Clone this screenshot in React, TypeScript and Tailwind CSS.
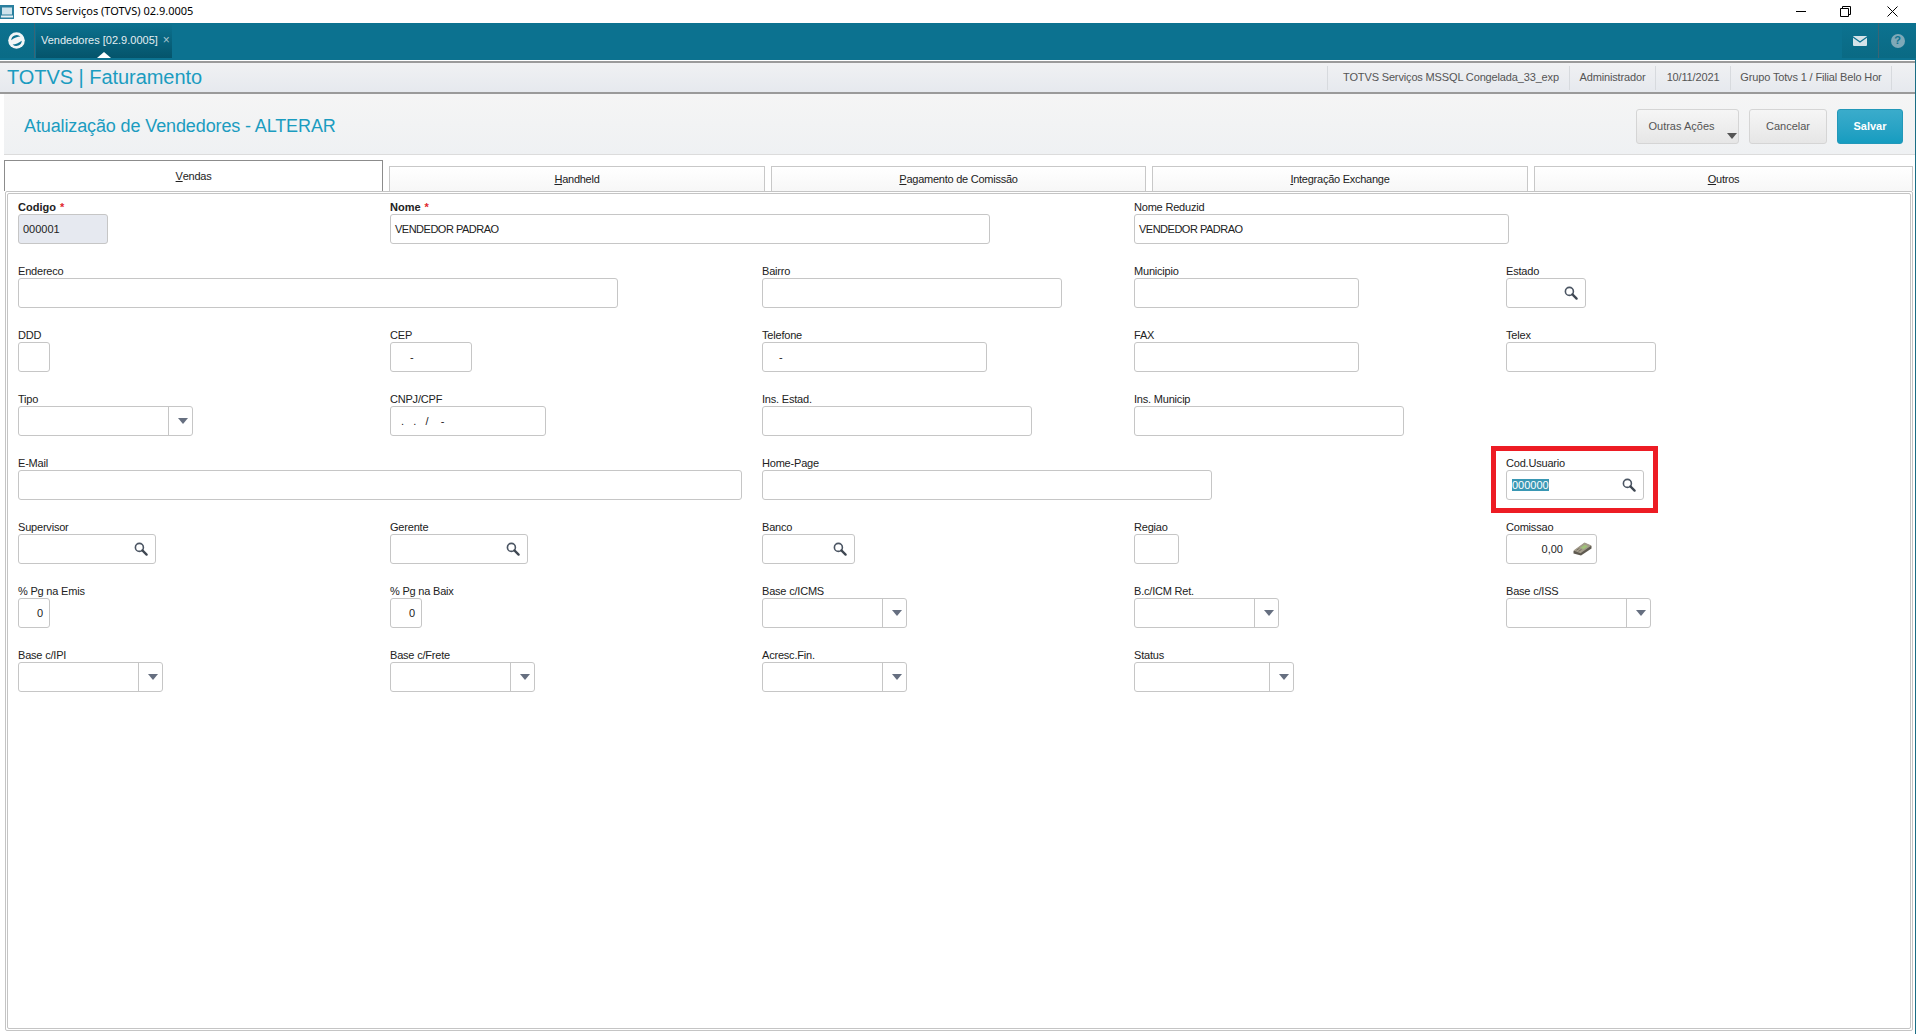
import React from "react";

const SANS = "[font-family:'Liberation_Sans',Arial,sans-serif]";

function SearchIcon() {
  return (
    <svg width="14" height="14" viewBox="0 0 14 14" className="block shrink-0">
      <circle cx="5.4" cy="5.4" r="4" fill="#fff" stroke="#4b5563" strokeWidth="1.6" />
      <path d="M8.4 8.4 L12.6 12.6" stroke="#3f4752" strokeWidth="2.3" strokeLinecap="round" />
    </svg>
  );
}

function MoneyIcon() {
  return (
    <svg width="19" height="14" viewBox="0 0 19 14" className="block shrink-0">
      <path d="M0.5 9 L11.5 1 L18.5 4 V6.5 L8 13.5 L0.5 11.5 Z" fill="#5f5a50" />
      <path d="M0.5 8.6 L11.5 0.6 L18.5 3.6 L7.5 11.2 Z" fill="#a39c8b" />
      <path d="M7.5 5.8 L11.8 2.8 L15 4.2 L10.6 7.2 Z" fill="#9fc278" />
      <path d="M3.5 8.2 L6.5 6.2 M5.5 9.4 L8.5 7.4" stroke="#77705f" strokeWidth="1" />
    </svg>
  );
}

function Caret({ color = "#666f80" }: { color?: string }) {
  return (
    <svg width="10" height="6" viewBox="0 0 10 6" className="block">
      <path d="M0 0 H10 L5 6 Z" fill={color} />
    </svg>
  );
}

type FieldProps = {
  label: string;
  w: number;
  value?: string;
  kind?: "text" | "search" | "select" | "money" | "right";
  required?: boolean;
  readOnly?: boolean;
  selected?: boolean;
  tight?: boolean;
  pad?: string;
};

function Field({ label, w, value, kind = "text", required, readOnly, selected, tight, pad }: FieldProps) {
  return (
    <div className="relative flex flex-col">
      <div className={`h-[14px] text-[11px] leading-[14px] text-[#222] whitespace-nowrap ${required ? "font-bold" : "tracking-[-0.2px]"}`}>
        {label}
        {required && <span className="ml-[4px] text-[#e0262c]">*</span>}
      </div>
      <div
        style={{ width: w }}
        className={`flex h-[30px] items-center rounded-[3px] border border-[#c6c6c6] text-[11px] text-[#222] ${
          readOnly ? "bg-[#e6e9f0]" : "bg-white"
        }`}
      >
        {kind === "select" ? (
          <>
            <div className="flex-1" />
            <div className="flex h-full w-[24px] items-center justify-center border-l border-[#c6c6c6] pl-[5px]">
              <Caret />
            </div>
          </>
        ) : kind === "right" ? (
          <span className="w-full pr-[6px] text-right">{value}</span>
        ) : kind === "money" ? (
          <>
            <span className="flex-1 pr-[10px] text-right">{value}</span>
            <span className="pr-[4px]">
              <MoneyIcon />
            </span>
          </>
        ) : (
          <>
            <span className={`flex-1 whitespace-pre ${tight ? "tracking-[-0.5px]" : ""} ${pad ?? "pl-[4px]"}`}>
              {selected ? <span className="bg-[#3a98b4] text-white">{value}</span> : value}
            </span>
            {kind === "search" && (
              <span className="pr-[7px]">
                <SearchIcon />
              </span>
            )}
          </>
        )}
      </div>
    </div>
  );
}

const Empty = () => <div />;

function ToolButton({ children, w, primary }: { children: React.ReactNode; w: number; primary?: boolean }) {
  return (
    <button
      style={{ width: w }}
      className={`relative flex h-[35px] items-center justify-center rounded-[3px] border pt-[1px] text-[11px] ${
        primary
          ? "border-[#2298b9] bg-gradient-to-b from-[#3aaccb] to-[#159cc0] font-bold text-white"
          : "border-[#d5d5d5] bg-gradient-to-b from-[#f6f6f6] to-[#e6e6e6] text-[#555]"
      }`}
    >
      {children}
    </button>
  );
}

function Tab({ ul, rest, active, className }: { ul: string; rest: string; active?: boolean; className: string }) {
  return (
    <div
      className={`flex items-center justify-center border border-b-0 text-[11px] tracking-[-0.25px] text-[#222] ${className} ${
        active ? "h-[31px] border-[#8c8c8c] bg-white" : "h-[25px] border-[#c8c8c8] bg-gradient-to-b from-white to-[#f7f7f7]"
      }`}
    >
      <span className="underline">{ul}</span>
      {rest}
    </div>
  );
}

const Seg = ({ children, w, className = "" }: { children: React.ReactNode; w: number; className?: string }) => (
  <div style={{ width: w }} className={`flex h-full items-center justify-center border-l border-[#d7dade] whitespace-nowrap ${className}`}>
    {children}
  </div>
);

export default function App() {
  return (
    <div className={`${SANS} flex h-[1034px] w-[1916px] flex-col overflow-hidden bg-white`}>
      {/* window title bar */}
      <div className="flex h-[23px] items-center bg-white">
        <svg width="14" height="14" viewBox="0 0 14 14" className="shrink-0">
          <rect x="0" y="0" width="14" height="14" fill="#2a7f9e" />
          <rect x="2" y="2.5" width="10" height="7" fill="#cfe3ec" />
          <rect x="1" y="10.5" width="12" height="2" fill="#e6f0f4" />
        </svg>
        <span className="ml-[6px] text-[11px] text-black [font-family:'Noto_Sans',sans-serif]">TOTVS Serviços (TOTVS) 02.9.0005</span>
        <div className="flex-1" />
        <svg width="10" height="1" viewBox="0 0 10 1" className="mr-[34px]">
          <rect width="10" height="1" fill="#000" />
        </svg>
        <svg width="11" height="11" viewBox="0 0 11 11" className="mr-[36px]">
          <path d="M0.5 2.5 H8.5 V10.5 H0.5 Z M2.5 2.5 V0.5 H10.5 V8.5 H8.5" fill="none" stroke="#000" />
        </svg>
        <svg width="11" height="11" viewBox="0 0 11 11" className="mr-[18px]">
          <path d="M0.5 0.5 L10.5 10.5 M10.5 0.5 L0.5 10.5" stroke="#000" />
        </svg>
      </div>

      {/* teal bar */}
      <div className="flex h-[37px] bg-[#0c7290]">
        <div className="mb-[2px] flex w-[35px] items-center justify-center border-r border-[#3a6474] bg-gradient-to-b from-[#0c7290] to-[#0a6b86] pr-[2px]">
          <svg width="17" height="17" viewBox="0 0 17 17">
            <circle cx="8.5" cy="8.5" r="8.3" fill="#f2f6f7" />
            <path d="M3.2 8.2 A5.4 5.4 0 0 1 12.4 4.6 Q8 4.6 3.2 8.2 Z" fill="#0c7290" />
            <path d="M13.8 8.8 A5.4 5.4 0 0 1 4.6 12.4 Q9 12.4 13.8 8.8 Z" fill="#0c7290" />
          </svg>
        </div>
        <div className="relative mb-[2px] ml-px flex w-[136px] items-center bg-gradient-to-b from-[#0c7290] to-[#05546b] pl-[5px] text-[11px] text-[#e4eef2]">
          <span className="whitespace-nowrap">Vendedores [02.9.0005]</span>
          <span className="ml-[5px] -translate-y-px text-[12px] leading-none text-[#a9c6d0]">×</span>
          <div className="absolute bottom-0 left-[61px] h-0 w-0 border-x-[7px] border-b-[6px] border-x-transparent border-b-white" />
        </div>
        <div className="flex-1" />
        <div className="mb-[2px] flex w-[37px] items-center justify-center border-r border-[#3a6474] bg-gradient-to-b from-[#0c7290] to-[#0a6a84]">
          <svg width="14" height="10" viewBox="0 0 14 10">
            <rect width="14" height="10" rx="1" fill="#d5e3e9" />
            <path d="M0 1 L7 6 L14 1" fill="none" stroke="#0c7290" strokeWidth="1.2" />
          </svg>
        </div>
        <div className="mb-[2px] flex w-[37px] items-center justify-center bg-gradient-to-b from-[#0c7290] to-[#0a6a84]">
          <div className="flex h-[14px] w-[14px] items-center justify-center rounded-full bg-[#7ea9b8] text-[11px] font-bold text-[#0c7290]">?</div>
        </div>
      </div>

      {/* everything below the teal bar, with the window's right edge line */}
      <div className="flex flex-1 flex-col border-r border-[#1a6e85]">
        {/* module header */}
        <div className="mt-[1px] flex h-[33px] items-center border-y-2 border-[#9a9a9a] bg-gradient-to-b from-[#f0f1f3] to-[#e6e9ee] pl-[7px]">
          <span className="-translate-y-px text-[20px] tracking-[-0.05px] text-[#1b9cc0]">TOTVS | Faturamento</span>
          <div className="flex-1" />
          <div className="mr-[23px] flex h-[24px] items-center border-r border-[#d7dade] text-[11px] tracking-[-0.15px] text-[#555]">
            <Seg w={242} className="pl-[5px]">TOTVS Serviços MSSQL Congelada_33_exp</Seg>
            <Seg w={86}>Administrador</Seg>
            <Seg w={75}>10/11/2021</Seg>
            <Seg w={161}>Grupo Totvs 1 / Filial Belo Hor</Seg>
          </div>
        </div>

        {/* title */}
        <div className="ml-[4px] flex h-[61px] items-center border-b border-[#dcdcdc] bg-gradient-to-b from-[#f5f5f5] to-[#eff1f3] pl-[20px] pt-[4px]">
          <span className="text-[18px] tracking-[-0.12px] text-[#1b9cc0]">Atualização de Vendedores - ALTERAR</span>
          <div className="flex-1" />
          <div className="mr-[12px] flex gap-[10px]">
            <ToolButton w={103}>
              <span className="-translate-x-[6px]">Outras Ações</span>
              <span className="absolute bottom-[4px] right-[1px] flex">
                <Caret color="#555" />
              </span>
            </ToolButton>
            <ToolButton w={78}>Cancelar</ToolButton>
            <ToolButton w={66} primary>Salvar</ToolButton>
          </div>
        </div>

        {/* tabs */}
        <div className="ml-[4px] mt-[5px] flex h-[31px] items-end gap-[6px] pr-[2px]">
          <Tab active ul="V" rest="endas" className="w-[379px]" />
          <Tab ul="H" rest="andheld" className="w-[376px]" />
          <Tab ul="P" rest="agamento de Comissão" className="w-[375px]" />
          <Tab ul="I" rest="ntegração Exchange" className="w-[376px]" />
          <Tab ul="O" rest="utros" className="flex-1" />
        </div>

        {/* form panel */}
        <div className="mb-[3px] ml-[5px] mr-[2px] flex-1 rounded-[2px] border border-[#c4c4c4] p-px">
          <div className="h-full rounded-[2px] border border-[#c4c4c4] pl-[10px] pt-[6px]">
            <div className="grid grid-cols-[repeat(5,372px)] auto-rows-[64px]">
              <Field label="Codigo" w={90} value="000001" required readOnly />
              <Field label="Nome" w={600} value="VENDEDOR PADRAO" required tight />
              <Empty />
              <Field label="Nome Reduzid" w={375} value="VENDEDOR PADRAO" tight />
              <Empty />

              <Field label="Endereco" w={600} />
              <Empty />
              <Field label="Bairro" w={300} />
              <Field label="Municipio" w={225} />
              <Field label="Estado" w={80} kind="search" />

              <Field label="DDD" w={32} />
              <Field label="CEP" w={82} value="-" pad="pl-[19px]" />
              <Field label="Telefone" w={225} value="-" pad="pl-[16px]" />
              <Field label="FAX" w={225} />
              <Field label="Telex" w={150} />

              <Field label="Tipo" w={175} kind="select" />
              <Field label="CNPJ/CPF" w={156} value=".   .   /    -" pad="pl-[10px]" />
              <Field label="Ins. Estad." w={270} />
              <Field label="Ins. Municip" w={270} />
              <Empty />

              <Field label="E-Mail" w={724} />
              <Empty />
              <Field label="Home-Page" w={450} />
              <Empty />
              <div className="relative">
                <Field label="Cod.Usuario" w={138} value="000000" kind="search" selected pad="pl-[5px]" />
                <div className="absolute left-[-15px] top-[-10px] h-[67px] w-[167px] border-[5px] border-[#ed1c24]" />
              </div>

              <Field label="Supervisor" w={138} kind="search" />
              <Field label="Gerente" w={138} kind="search" />
              <Field label="Banco" w={93} kind="search" />
              <Field label="Regiao" w={45} />
              <Field label="Comissao" w={91} kind="money" value="0,00" />

              <Field label="% Pg na Emis" w={32} kind="right" value="0" />
              <Field label="% Pg na Baix" w={32} kind="right" value="0" />
              <Field label="Base c/ICMS" w={145} kind="select" />
              <Field label="B.c/ICM Ret." w={145} kind="select" />
              <Field label="Base c/ISS" w={145} kind="select" />

              <Field label="Base c/IPI" w={145} kind="select" />
              <Field label="Base c/Frete" w={145} kind="select" />
              <Field label="Acresc.Fin." w={145} kind="select" />
              <Field label="Status" w={160} kind="select" />
              <Empty />
            </div>
          </div>
        </div>
      </div>
    </div>
  );
}
